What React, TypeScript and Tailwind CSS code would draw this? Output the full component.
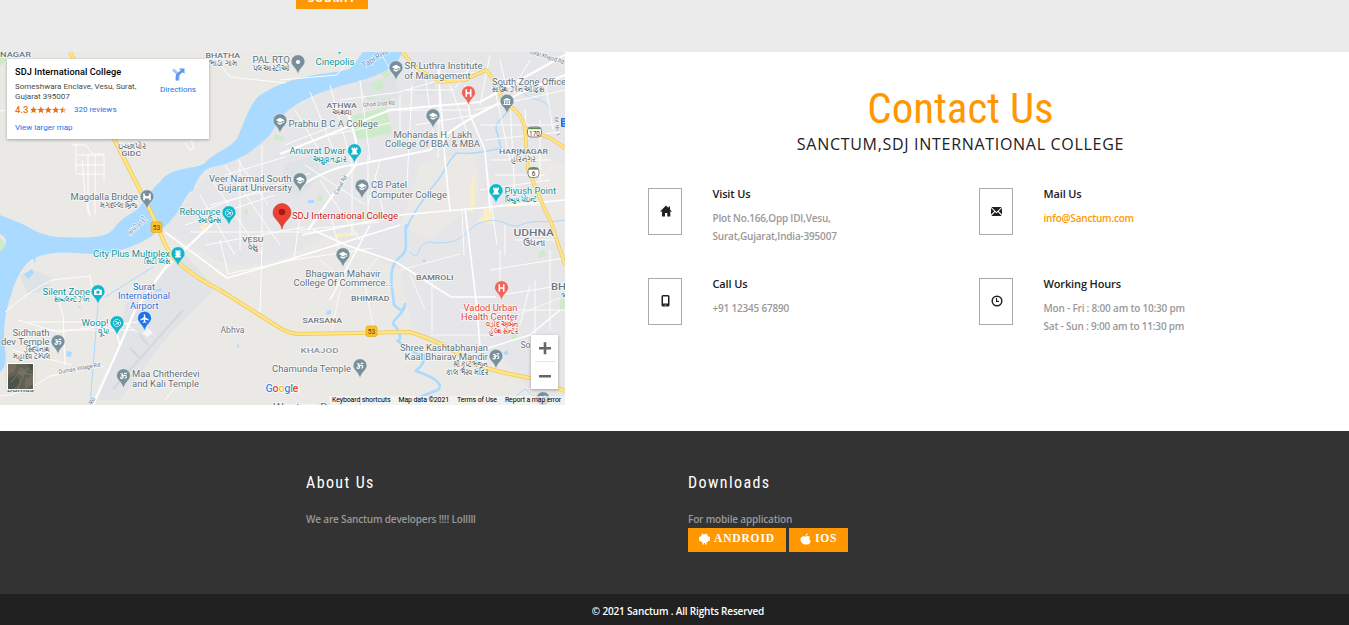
import React from "react";

type Label = { t: string; x: number; y: number; w?: number; s?: number; c?: string; b?: number; r?: number };

const SLATE = "#5b7280";
const TEAL = "#0e939d";
const TOWN = "#6b7784";

const labels: Label[] = [
  { t: "NAGAR", x: 0, y: 57, w: 31, s: 7.5, c: TOWN, b: 500 },
  { t: "BHATHA", x: 205.5, y: 58, w: 34.5, s: 7.5, c: TOWN, b: 500 },
  { t: "ભાઠા ગામ", x: 209, y: 66, w: 29, s: 7.5, c: TOWN },
  { t: "PAL RTO", x: 252.5, y: 63, w: 37.5, c: SLATE },
  { t: "પલ આરટીઓ", x: 252.5, y: 71, w: 37, s: 7.5, c: SLATE },
  { t: "Cinepolis", x: 315.5, y: 64.5, w: 39, c: TEAL },
  { t: "Tapi River", x: 364, y: 68, w: 32, s: 8, c: "#5f8fc9", r: -32 },
  { t: "SR Luthra Institute", x: 404.5, y: 69, w: 78, c: SLATE },
  { t: "of Management", x: 404.5, y: 78.5, w: 66, c: SLATE },
  { t: "South Zone Office", x: 492, y: 84.5, w: 74, c: SLATE },
  { t: "સાઉથ ઝોન ઓફિસ", x: 492, y: 92, w: 52, s: 7.5, c: SLATE },
  { t: "ATHWA", x: 326.5, y: 107.5, w: 30.5, s: 7.5, c: TOWN, b: 500 },
  { t: "અથવા", x: 332, y: 115, w: 20, s: 7.5, c: TOWN },
  { t: "Ghod Dod Rd", x: 363, y: 107, w: 32, s: 6, c: TOWN, r: -4 },
  { t: "Surat Khajod Rd", x: 529, y: 53, w: 36, s: 6, c: TOWN, r: 18 },
  { t: "Bd. No. 3", x: 554, y: 117, w: 19, s: 5.5, c: TOWN, r: 82 },
  { t: "Prabhu B C A College", x: 288.5, y: 127, w: 89.5, c: SLATE },
  { t: "Mohandas H. Lakh", x: 393.5, y: 138, w: 78.5, c: SLATE },
  { t: "College Of BBA & MBA", x: 385, y: 147, w: 95, c: SLATE },
  { t: "Anuvrat Dwar", x: 289.5, y: 153.5, w: 56, c: TEAL },
  { t: "અણુવ્રત દ્વાર", x: 312.5, y: 161.5, w: 34, s: 7.5, c: TEAL },
  { t: "HARINAGAR", x: 499, y: 154, w: 49, s: 7.5, c: TOWN, b: 500 },
  { t: "હરિનગર", x: 511, y: 161.5, w: 25, s: 7.5, c: TOWN },
  { t: "Canal Rd", x: 337, y: 195, w: 21, s: 6, c: TOWN, r: -60 },
  { t: "ઇચ્છાપોર", x: 117.5, y: 148.5, w: 29, s: 7.5, c: TOWN },
  { t: "GIDC", x: 121.5, y: 156, w: 19.5, s: 7.5, c: TOWN, b: 500 },
  { t: "Veer Narmad South", x: 209, y: 181.5, w: 82.5, c: SLATE },
  { t: "Gujarat University", x: 217.5, y: 191, w: 74.5, c: SLATE },
  { t: "CB Patel", x: 371, y: 188, w: 36, c: SLATE },
  { t: "Computer College", x: 371, y: 197.5, w: 76, c: SLATE },
  { t: "Magdalla Bridge", x: 70.5, y: 200, w: 67.5, c: SLATE },
  { t: "મગદલ્લા બ્રિજ", x: 100, y: 207.5, w: 38, s: 7.5, c: SLATE },
  { t: "તાપી નદી", x: 130, y: 236, w: 24, s: 7.5, c: "#5f8fc9", r: -43 },
  { t: "Rebounce", x: 179.5, y: 215, w: 41, c: TEAL },
  { t: "રેબાઉન્સ", x: 198, y: 223, w: 23, s: 7.5, c: TEAL },
  { t: "Piyush Point", x: 504.5, y: 193.5, w: 51.5, c: TEAL },
  { t: "પિયુષ પોઇન્ટ", x: 504.5, y: 201.5, w: 33, s: 7.5, c: TEAL },
  { t: "SDJ International College", x: 292, y: 219, w: 106, c: "#c5221f" },
  { t: "UDHNA", x: 513.5, y: 236, w: 40.5, s: 9, c: TOWN, b: 500 },
  { t: "ઉધના", x: 522.5, y: 246, w: 23, s: 9, c: TOWN },
  { t: "VESU", x: 242, y: 242, w: 21.5, s: 7.5, c: TOWN, b: 500 },
  { t: "વેસુ", x: 247.5, y: 250, w: 10, s: 7.5, c: TOWN },
  { t: "City Plus Multiplex", x: 93, y: 256.5, w: 77, c: TEAL },
  { t: "સિટી પ્લસ", x: 144, y: 264, w: 26, s: 7.5, c: TEAL },
  { t: "Bhagwan Mahavir", x: 305.5, y: 277, w: 75, c: SLATE },
  { t: "College Of Commerce...", x: 293.5, y: 286, w: 99.5, c: SLATE },
  { t: "BAMROLI", x: 416, y: 279.5, w: 37.5, s: 7.5, c: TOWN, b: 500 },
  { t: "BH", x: 551, y: 289.5, w: 15, s: 9, c: TOWN, b: 500 },
  { t: "ભ", x: 561, y: 299, s: 8, c: TOWN },
  { t: "Surat", x: 133, y: 289.5, w: 22, c: "#2f6ed3" },
  { t: "International", x: 118, y: 299, w: 52, c: "#2f6ed3" },
  { t: "Airport", x: 130, y: 308.5, w: 28.5, c: "#2f6ed3" },
  { t: "Silent Zone", x: 42.5, y: 295, w: 47.5, c: TEAL },
  { t: "સાયલન્ટ ઝોન", x: 54, y: 302, w: 36, s: 7.5, c: TEAL },
  { t: "BHIMRAD", x: 351, y: 301, w: 38.5, s: 7.5, c: TOWN, b: 500 },
  { t: "Vadod Urban", x: 463.5, y: 310.5, w: 54, c: "#e24840" },
  { t: "Health Center", x: 461, y: 319.5, w: 57, c: "#e24840" },
  { t: "વડોદ અર્બન", x: 486, y: 327, w: 32, s: 7.5, c: "#e24840" },
  { t: "હેલ્થ સેન્ટર", x: 489, y: 334, w: 29, s: 7.5, c: "#e24840" },
  { t: "SARSANA", x: 302.5, y: 322.5, w: 39.5, s: 7.5, c: TOWN, b: 500 },
  { t: "Woop!", x: 81.5, y: 325.5, w: 27, c: TEAL },
  { t: "વૂપ!", x: 98, y: 334, w: 11, s: 7.5, c: TEAL },
  { t: "Abhva", x: 220.5, y: 333, w: 24, s: 8.3, c: TOWN },
  { t: "Sidhnath", x: 12.5, y: 335.5, w: 37, c: SLATE },
  { t: "dev Temple", x: 1, y: 345, w: 48.5, c: SLATE },
  { t: "સિદ્ધનાથ", x: 26, y: 352, w: 24, s: 7.5, c: SLATE },
  { t: "મહાદેવ ટેમ્પલ", x: 13, y: 359, w: 37, s: 7.5, c: SLATE },
  { t: "KHAJOD", x: 300.5, y: 353, w: 38, s: 7.5, c: "#8b929a", b: 500 },
  { t: "Shree Kashtabhanjan", x: 400, y: 350.5, w: 88, c: SLATE },
  { t: "Kaal Bhairav Mandir", x: 404.5, y: 359.5, w: 83.5, c: SLATE },
  { t: "શ્રી કષ્ટભંજન", x: 453, y: 367, w: 35, s: 7.5, c: SLATE },
  { t: "કાલ ભૈરવ મંદિર", x: 446, y: 374.5, w: 42, s: 7.5, c: SLATE },
  { t: "So", x: 520.5, y: 348, w: 10, c: TOWN },
  { t: "Chamunda Temple", x: 272, y: 372, w: 79, c: SLATE },
  { t: "Dumas Village Rd", x: 59, y: 374, w: 42, s: 6, c: TOWN, r: -10 },
  { t: "Maa Chitherdevi", x: 132, y: 377, w: 67.5, c: SLATE },
  { t: "and Kali Temple", x: 132, y: 386.5, w: 67, c: SLATE },
  { t: "Dumas", x: 7, y: 392, w: 27, s: 8, c: TOWN, b: 500 },
  { t: "Rd", x: 92, y: 405, s: 6, c: TOWN, r: -60 },
  { t: "Western Dimond...", x: 273, y: 410, w: 98, c: SLATE },
];

type PinKind = "cap" | "dot" | "H" | "bank" | "fort" | "om" | "film" | "camera" | "plane" | "ball" | "bridge";
const pins: { x: number; y: number; c: string; k: PinKind }[] = [
  { x: 298, y: 62, c: "#78909c", k: "dot" },
  { x: 396, y: 68, c: "#78909c", k: "cap" },
  { x: 280, y: 121, c: "#78909c", k: "cap" },
  { x: 433, y: 116, c: "#78909c", k: "cap" },
  { x: 468.5, y: 93, c: "#f0625a", k: "H" },
  { x: 507, y: 101.5, c: "#78909c", k: "bank" },
  { x: 354.5, y: 151, c: "#12b5cb", k: "fort" },
  { x: 300, y: 180, c: "#78909c", k: "cap" },
  { x: 362, y: 186.5, c: "#78909c", k: "cap" },
  { x: 496, y: 191, c: "#12b5cb", k: "fort" },
  { x: 147, y: 197, c: "#78909c", k: "bridge" },
  { x: 229, y: 213, c: "#12b5cb", k: "ball" },
  { x: 178, y: 254, c: "#12b5cb", k: "film" },
  { x: 343, y: 255, c: "#78909c", k: "cap" },
  { x: 98, y: 292, c: "#12b5cb", k: "camera" },
  { x: 144.5, y: 318.5, c: "#1a73e8", k: "plane" },
  { x: 117, y: 323, c: "#12b5cb", k: "ball" },
  { x: 58, y: 342, c: "#78909c", k: "om" },
  { x: 501.5, y: 288, c: "#f0625a", k: "H" },
  { x: 360, y: 366, c: "#78909c", k: "om" },
  { x: 496, y: 356.5, c: "#78909c", k: "om" },
  { x: 123.5, y: 376, c: "#78909c", k: "om" },
  { x: 543, y: 399, c: "#78909c", k: "om" },
];

function PinGlyph({ k }: { k: PinKind }) {
  switch (k) {
    case "cap":
      return <path d="M-4.2-1L0-3.2 4.2-1V2H3.4V-.4L0 1.4zM-2.5 .9L0 2.2 2.5 .9V2.4L0 3.7-2.5 2.4z" />;
    case "dot":
      return <circle r="2.1" />;
    case "H":
      return <path d="M-3-3.8h1.6v3h2.8v-3H3v7.6H1.4V.7h-2.8v3.1H-3z" />;
    case "bank":
      return <path d="M-3.6-1.8L0-3.6 3.6-1.8V-1h-7.2zM-3-.5h1.2v2.7H-3zM-.6-.5H.6v2.7H-.6zM1.8-.5H3v2.7H1.8zM-3.6 2.5h7.2v1h-7.2z" />;
    case "fort":
      return <path d="M-3-3.6h1.4v1h1v-1H.6v1h1v-1H3v2.4H2L2.3 1.9H3.3V3.5H-3.3V1.9h1L-2-1.2h-1z" />;
    case "film":
      return <path d="M-2.8-3.4h5.6v1h-1v.8h1v1h-1v.8h1v1h-1V2h1v1.400h-5.600V2h1v-.8h-1v-1h1v-.8h-1v-1h1v-.8h-1z" />;
    case "camera":
      return <path fillRule="evenodd" d="M-3.8-2.2h2l.8-1h2l.8 1h2V3h-7.6zM0-1.5a1.7 1.7 0 100 3.4 1.7 1.7 0 000-3.4z" />;
    case "plane":
      return <path d="M-.7-4h1.4v2.8L4.2 1v1L.7 1V3l1.1.8v.8L0 4.1l-1.8.5v-.8L-.7 3V1l-3.5 1V1L-.7-1.2z" />;
    case "bridge":
      return <path d="M-3.8-3.4h1.6v1.6A3 3 0 000-.8a3 3 0 002.2-1v-1.6h1.6v6.6H2.2V1.6h-4.4v1.6h-1.6z" />;
    case "ball":
      return (
        <g fill="none" stroke="#fff" strokeWidth="1">
          <circle r="3.6" strokeDasharray="1.6 .7" />
          <path d="M-1.8-1.4Q1-2 1.4 1.8M-1.6 1.8Q0-.4 2.4-.6" />
        </g>
      );
    default:
      return <path fill="none" stroke="#fff" strokeWidth="1.1" d="M-3-2Q-.6-3-.9-.7L-1.8 0Q.2.4-.8 2-2.2 3-3.4 1.4M-.6.2Q1.6-1.6 2.8 0 3 2.4 1 2M.8-3.2Q2-1.8 3.2-3" />;
  }
}

function Pin({ x, y, c, k }: { x: number; y: number; c: string; k: PinKind }) {
  return (
    <g transform={`translate(${x} ${y})`}>
      <path d="M0-7.2A6.9 6.9 0 00-6.9-.3C-6.9 4-1.6 5.6 0 12.4 1.6 5.6 6.9 4 6.9-.3A6.9 6.9 0 000-7.2z" fill={c} stroke="#fff" strokeOpacity=".6" strokeWidth=".7" />
      <g fill="#fff">
        <PinGlyph k={k} />
      </g>
    </g>
  );
}

function Shield({ x, y, n }: { x: number; y: number; n: string }) {
  return (
    <g transform={`translate(${x} ${y})`}>
      <rect x="-5.5" y="-5.5" width="11" height="10.5" rx="2" fill="#fbc02d" stroke="#e0a100" strokeWidth=".6" />
      <text y="2.2" textAnchor="middle" fontSize="6.5" fill="#5a4300">{n}</text>
    </g>
  );
}

function RoadBadge({ x, y, n }: { x: number; y: number; n: string }) {
  const w = n.length > 1 ? 7 : 5.5;
  return (
    <g transform={`translate(${x} ${y})`}>
      <rect x={-w} y="-5" width={w * 2} height="10" rx="3.5" fill="#fff" stroke="#777" strokeWidth=".9" />
      <path d={`M${-w + 1}-4.6H${w - 1}V-2.8H${-w + 1}z`} fill="#5f8f4c" />
      <text y="3.6" textAnchor="middle" fontSize="6.5" fill="#333">{n}</text>
    </g>
  );
}

function MapDrawing() {
  return (
    <svg className="block h-full w-full font-['Roboto','Noto_Sans',sans-serif]" viewBox="0 52 565 353">
      <rect y="52" width="565" height="353" fill="#ebe9e5" />
      <path fill="#e6e6e8" d="M405 52H565V405H540L505 360 430 345 412 325 400 270 330 235 260 270 215 260 180 240 160 226 177 213 193 193 213 167 240 157 267 137 285 113 347 80 397 63z" />
      <path fill="#e2e3e6" d="M125 305L185 255 215 288 165 340 120 400H95L118 345z" />
      <path fill="#ebe9e5" d="M420 165L475 150 480 200 430 240 400 225zM230 270L320 250 400 280 410 330 280 330 215 290zM530 150L565 165V245L545 205z" />
      <g fill="#dfe3e6">
        <path d="M20 275L35 270 52 278 48 293 27 293z" />
        <path d="M285 165l28-10 10 20-25 22-20-10zM360 83l35-8 4 22-30 5zM415 80l20 2v12h-20zM525 75l22 5-6 18-20-6z" />
      </g>
      <g fill="#cdebc8">
        <path d="M352 116l34-9 6 26-36 7zM372 84l9-5 4 8-10 4zM381 73l7-3 3 6-7 2zM381 100l10-2v4l-10 1zM366 96l6-2 1 5-6 1zM538 253l6-4 2 7-7 2zM0 238l6 5-6 10zM275 134l10 3-2 4-9-2zM244 210l4-1v5l-4 1zM560 300l5-2v12h-5zM0 66l6-5v-9H0zM511 335l5-2 1 5-5 2z" />
        <circle cx="320" cy="198" r="3" />
      </g>
      <g fill="#fbeec4">
        <path d="M472 177l3 1-1 12 1 13-2 10-4-1 2-14-2-8 2-4zM484 208l8 2v9l1 5-14-2v-4l4-1zM198 227l10-4-4 8zM336 234l22-2v3l-22 3zM508 203l15-1v4l-15 1z" />
      </g>

      <g fill="#aadaff">
        <path d="M363 52C357 60 353 67 347 70 330 74 295 73 260 95 250 103 243 125 238 137 232 148 214 152 205 163 195 170 170 166 160 182 150 190 147 200 143 202 136 214 125 214 115 227 107 239 92 238 57 237 38 235 30 227 20 223L0 215V234Q12 240 0 252V372Q8 366 5 350C2 325 7 306 12 292 18 272 28 259 37 257 70 245 90 262 127 248 145 242 152 236 158 231 170 224 172 218 177 213 184 202 188 190 193 191 198 176 205 168 213 167 228 164 240 158 247 154 258 146 262 142 270 135 276 125 280 117 285 113 305 97 322 92 347 84 365 80 385 74 397 62L403 52z" />
        <path d="M24 274l8-5 2 4-6 6zM33 259l3-4-1 8zM67 351l5 1-1 5-5-1zM155 290l7-2-1 3-6 1zM78 306l4 1-3 1zM327 311l4-1v4l-5 1zM422 259l4 1-2 3zM308 200h6v3h-6zM503 353l4-3 2 4-4 1zM237 346l2-2v4z" />
      </g>
      <g fill="none" stroke="#aadaff" strokeWidth="1.6" strokeLinecap="round">
        <path d="M510 110Q492 125 497 132L501 148Q475 155 456 153C445 165 445 172 438 180L430 190C425 198 412 213 407 228" strokeWidth="1.6" />
        <path d="M513 86Q530 100 540 100 548 104 550 110" strokeWidth="1" />
        <path d="M406 225C404 240 410 250 400 257 386 267 393 290 394 305L402 311Q406 303 405 304C405 314 393 318 393 324 400 330 402 340 398 341Q416 356 424 355C425 368 414 370 416 371 430 376 445 383 438 390 420 397 412 398 420 405" strokeWidth="2.6" />
        <path d="M153 267L105 297M98 305L90 405M410 252Q417 262 420 248 425 240 436 243 450 243 457 240C470 232 475 222 484 222 500 216 508 228 518 226 535 218 545 224 565 220M517 395l8-6 12 10" strokeWidth="1" />
      </g>

      <g fill="none" stroke="#fff" strokeWidth="1" strokeOpacity=".9">
        <path d="M72 145h14l6 9h12v28M78 155h25M75 165h28M76 174h27M88 154v60M95 155v60M82 160l3 35 5 22M80 195h18M185 143l5 7 4-2-3-8M210 52l20 25 56 6M0 111l7-1M280 80l57-5 8-10M76 143v30" />
        <path d="M5 312Q30 290 52 280L90 276 92 290M55 290l8 25 2 50M28 322h70M35 330h100M18 320l40 12 80-10M12 350l60 15M120 320l17 12M0 396q20 0 50-20l25-5 30-5M165 400l20-25" />
        <path d="M190 215l120-42M185 225l90-30M200 195l35 60M212 180l50 75M225 165l55 80M238 160l30 45M190 232h125M205 245l100-18M240 160v90M262 145v100M220 240l8 34 65-14 80-12M262 247l-2 65M225 175l60-18M210 205l80-20M300 215l-6 45M330 213l10 40M300 230l80-8" />
        <path d="M295 110l30 50M310 92l25 62M330 85l22 80M285 145l50-20M360 80l10 80M340 100l60-8 40-12M400 95v50M412 85l-5 100M425 75l10 70M440 68l-2 90M450 85l20 55M405 90h50M395 110h75M415 125l60-10M330 135l60-12M352 165v70M368 155v60M380 160l-12 45M305 165l60 40M375 175l10 45M320 180l40 60" />
        <path d="M475 60l-20 28M490 55l-10 50M500 60l8 35M530 60l-18 30M545 80l8 50M475 110l90-20M480 125h80M485 140l75-8M490 160h60M495 175h50M480 190l70-10M500 205h45M505 225v30M515 240h40M490 270l75-12M495 90l15 70M510 100l5 100M525 110l5 70M540 120v60M487 170l10 75M462 210l2 45M500 250v40M530 285l-10 40M500 295l65-10M510 310h55M535 280v60M550 250v80" />
        <path d="M400 270l30-8 30-8M410 275l15 35M432 273v60M350 290l30-35M340 290l-8 40M365 285l8 40M310 325v-10M320 260l30 25M460 310l50 8 50-20M430 335h70l5-20M380 52l12 20M405 65l25 10 60-3" strokeOpacity=".7" />
      </g>
      <g fill="none" stroke="#fff" strokeWidth="2.2" strokeLinejoin="round">
        <path d="M213 223L165 268 135 310 120 345 93 405M280 154L390 110 480 102 565 55M300 186Q335 165 355 165L430 150Q460 115 565 75M308 230L340 185 356 165V140L347 110" />
        <path d="M302 235Q350 225 400 215L480 208 565 200M165 232L227 278 262 268 400 225M313 230l33 15 50 17 55 35h45M438 68L445 160 450 210M465 85l5 30 15 35 5 60M465 208l12 100 3 40" strokeWidth="1.6" />
        <path d="M485 349L530 335 560 310M120 345l-5-18M370 225l-40 75" strokeWidth="1.4" />
      </g>
      <path d="M113 389L183 310M130 348l9 9M140 335l8 10" fill="none" stroke="#d5d8dc" strokeWidth="2.500" />
      <path d="M142 333l6-5 5 5-6 4z" fill="#f5f5f5" />
      <g fill="none" strokeLinejoin="round">
        <path d="M70 52L112 135 150 210 160 232Q168 255 178 262 195 278 220 290L280 328Q290 334 300 334L410 332Q450 345 475 365L505 373 530 378 565 391" stroke="#eec94f" strokeWidth="4" />
        <path d="M70 52L112 135 150 210 160 232Q168 255 178 262 195 278 220 290L280 328Q290 334 300 334L410 332Q450 345 475 365L505 373 530 378 565 391" stroke="#ffe48c" strokeWidth="2.6" />
        <path d="M402 52Q412 64 420 70L440 82 465 80 486 70Q497 82 503 102 522 112 525 128L528 170 545 210Q553 225 555 235L565 265M525 128L550 138 565 148" stroke="#eec94f" strokeWidth="3.6" />
        <path d="M402 52Q412 64 420 70L440 82 465 80 486 70Q497 82 503 102 522 112 525 128L528 170 545 210Q553 225 555 235L565 265M525 128L550 138 565 148" stroke="#ffe48c" strokeWidth="2.3" />
      </g>

      <Shield x={156.5} y={227.5} n="53" />
      <Shield x={371.5} y={331.5} n="53" />
      <RoadBadge x={534.5} y={132} n="170" />
      <RoadBadge x={533.5} y={172.5} n="6" />
      <rect x="561" y="118" width="9" height="9" rx="1" fill="#1a73e8" />
      <path d="M562.500 120H566M562.500 122.500H565M562.500 125H566" stroke="#fff" strokeWidth=".8" />
      <path d="M338 52h3l-1.500 2z" fill="#12b5cb" />

      {pins.map((p) => (
        <Pin key={`${p.x}-${p.y}`} {...p} />
      ))}
      <path d="M282 203.500a9 9 0 00-9 9c0 6.500 7.500 8.500 9 16.500 1.500-8 9-10 9-16.500a9 9 0 00-9-9z" fill="#ea4335" stroke="#c5221f" strokeWidth=".5" />
      <circle cx="282" cy="212" r="3.3" fill="#b31412" />

      {labels.map((l) => (
        <text
          key={`${l.t}-${l.x}`}
          x={l.x}
          y={l.y}
          fontSize={l.s ?? 9}
          fontWeight={l.b ?? 400}
          fill={l.c}
          stroke="#fff"
          strokeWidth="1.6"
          strokeOpacity=".75"
          strokeLinejoin="round"
          paintOrder="stroke"
          textLength={l.w}
          lengthAdjust="spacingAndGlyphs"
          transform={l.r ? `rotate(${l.r} ${l.x} ${l.y})` : undefined}
        >
          {l.t}
        </text>
      ))}
      <text x="265.500" y="391.500" fontSize="11" fontWeight="500" stroke="#fff" strokeWidth="1.500" paintOrder="stroke" textLength="33">
        <tspan fill="#4285f4">G</tspan><tspan fill="#ea4335">o</tspan><tspan fill="#fbbc05">o</tspan><tspan fill="#4285f4">g</tspan><tspan fill="#34a853">l</tspan><tspan fill="#ea4335">e</tspan>
      </text>
    </svg>
  );
}

function Stars() {
  return (
    <svg className="h-[8px] w-[37px]" viewBox="0 0 37 8" fill="#e7711b">
      {[0, 1, 2, 3].map((i) => (
        <path key={i} transform={`translate(${i * 7.4} 0)`} d="M3.500.2l1 2.500 2.700.2-2.100 1.700.7 2.700-2.300-1.500-2.300 1.500.7-2.700L-.2 2.900l2.700-.2z" />
      ))}
      <path transform="translate(29.600 0)" d="M3.500.2V5.800L1.200 7.300l.7-2.700L-.2 2.900l2.700-.2z" />
      <path transform="translate(29.600 0)" fill="#f3b993" d="M3.500.2l1 2.500 2.700.2-2.100 1.700.7 2.700-2.300-1.500z" />
    </svg>
  );
}

function MapCard() {
  return (
    <div className="absolute left-[7px] top-[7px] flex h-[80px] w-[202px] justify-between bg-white pl-[8px] pr-[13px] shadow-[0_1px_3px_rgba(0,0,0,0.3)]">
      <div className="whitespace-nowrap pt-[6px] text-[8px] leading-[10px]">
        <div className="text-[9.200px] font-medium leading-[13px] tracking-[0.080px] text-black">SDJ International College</div>
        <div className="mt-[4px] tracking-[0.010px] text-[#4a4a4a]">Someshwara Enclave, Vesu, Surat,<br />Gujarat 395007</div>
        <div className="mt-[3px] flex items-center text-[#1a73e8]">
          <span className="w-[15px] text-[9.500px] font-medium text-[#e7711b]">4.3</span>
          <Stars />
          <span className="ml-[7px]">320 reviews</span>
        </div>
        <div className="mt-[8px] text-[#1a73e8]">View larger map</div>
      </div>
      <div className="flex flex-col items-center pt-[9px] text-[8px] leading-[10px] text-[#1a73e8]">
        <svg className="h-[13px] w-[13px]" viewBox="0 0 13 13" fill="none">
          <path d="M1 1.500L6.200 6.500V12.500" stroke="#a9c7f5" strokeWidth="3" />
          <path d="M5 12.500V9Q5 7 6.500 6L10 3" stroke="#5e97f0" strokeWidth="2.800" />
          <path d="M7 .5h5.500V6z" fill="#5e97f0" />
        </svg>
        <span className="mt-[4px]">Directions</span>
      </div>
    </div>
  );
}

function MapPanel() {
  return (
    <div className="relative h-[353px] w-[565px] shrink-0 overflow-hidden font-['Roboto',sans-serif]">
      <MapDrawing />
      <MapCard />
      <svg className="absolute left-[7px] top-[311px] h-[27px] w-[27px] border border-white shadow" viewBox="0 0 25 25">
        <rect width="25" height="25" fill="#5f6152" />
        <path d="M0 0h9L6 8l-6 3zM12 3l7 3-4 7-6-4zM17 15l8-4v9l-8 5z" fill="#746c5c" />
        <path d="M0 14l9-3 3 8-7 6H0zM19 0h6v8z" fill="#4b5446" />
        <path d="M3 18L12 8l12 3M10 25l3-9 7-12" stroke="#80786a" fill="none" />
      </svg>
      <div className="absolute left-[531px] top-[283px] flex h-[54px] w-[27px] flex-col items-center bg-white shadow-[0_1px_3px_rgba(0,0,0,0.3)]">
        <svg className="h-[54px] w-[27px]" viewBox="0 0 27 54" stroke="#666" strokeWidth="2.600">
          <path d="M8 13.300h12M14 7.300v12M8 41.200h12" />
          <path d="M4 26.500h20" stroke="#e6e6e6" strokeWidth="1" />
        </svg>
      </div>
      <div className="absolute bottom-0 right-0 flex h-[9px] items-center gap-[8px] bg-[#f5f5f5]/70 pl-[3px] pr-[4px] text-[7px] leading-[9px] tracking-[-0.130px] whitespace-nowrap text-black">
        <span>Keyboard shortcuts</span>
        <span>Map data ©2021</span>
        <span>Terms of Use</span>
        <span>Report a map error</span>
      </div>
    </div>
  );
}

const HomeIcon = () => (
  <svg className="ml-[1px] h-[12px] w-[12px]" viewBox="0 0 12 12" fill="#212121"><path d="M6 .5L8.500 3V1.500H10v3L12 6.600H10.300V11.500H7.300V8H5v3.500H2V6.600H0z" /></svg>
);
const MailIcon = () => (
  <svg className="ml-[1px] h-[9px] w-[11px]" viewBox="0 0 11 9" fill="#212121"><path d="M.3 0h10.400L5.500 5zM0 1l3.300 3.200L0 7.600zM11 1v6.600L7.700 4.200zM4 4.900l1.500 1.400L7 4.900l3.700 4.100H.3z" /></svg>
);
const PhoneIcon = () => (
  <svg className="h-[12px] w-[9px]" viewBox="0 0 9 12" fill="#212121"><path fillRule="evenodd" d="M2 0h5a1.500 1.500 0 011.500 1.500v8.500A1.500 1.500 0 017 11.500H2A1.500 1.500 0 01.5 10V1.500A1.500 1.500 0 012 0zM2 1.600v7h5v-7zM3.700 9.700v.8h1.600v-.8z" /></svg>
);
const ClockIcon = () => (
  <svg className="ml-[1px] h-[12px] w-[12px]" viewBox="0 0 12 12" fill="none" stroke="#212121"><circle cx="6" cy="6" r="4.800" strokeWidth="1.500" /><path d="M5.500 3v3.400H8" strokeWidth="1.100" /></svg>
);

function InfoItem({ icon, title, children }: { icon: React.ReactNode; title: string; children: React.ReactNode }) {
  return (
    <div className="flex h-[47px]">
      <div className="flex h-[47px] w-[34px] shrink-0 items-center justify-center border border-[#aaa] pb-[1px]">{icon}</div>
      <div className="ml-[30.500px] whitespace-nowrap">
        <h4 className="text-[11px] font-semibold leading-[12px] tracking-[-0.140px] text-[#212121]">{title}</h4>
        <div className="mt-[10px] text-[10px] font-semibold leading-[17.600px] tracking-[-0.200px] text-[#999]">{children}</div>
      </div>
    </div>
  );
}

function Contact() {
  return (
    <div className="flex-1 pt-[33px]">
      <div className="ml-[7px] flex flex-col items-center">
        <h2 className="h-[47px] text-[43px] leading-[47px] text-[#ff9800] font-['Roboto_Condensed','Roboto',sans-serif] [font-stretch:75%]">Contact Us</h2>
        <p className="text-[16px] leading-[24px] tracking-[0.700px] text-[#212121]">SANCTUM,SDJ INTERNATIONAL COLLEGE</p>
      </div>
      <div className="ml-[83px] mt-[32px] grid grid-cols-[331px_300px] gap-y-[43px]">
        <InfoItem icon={<HomeIcon />} title="Visit Us">Plot No.166,Opp IDI,Vesu,<br />Surat,Gujarat,India-395007</InfoItem>
        <InfoItem icon={<MailIcon />} title="Mail Us"><span className="text-[#ff9800]">info@Sanctum.com</span></InfoItem>
        <InfoItem icon={<PhoneIcon />} title="Call Us">+91 12345 67890</InfoItem>
        <InfoItem icon={<ClockIcon />} title="Working Hours">Mon - Fri : 8:00 am to 10:30 pm<br />Sat - Sun : 9:00 am to 11:30 pm</InfoItem>
      </div>
    </div>
  );
}

const AndroidIcon = () => (
  <svg className="h-[12px] w-[11px] shrink-0" viewBox="0 0 11 12" fill="#fff"><path d="M3 .3L4.200 1.200H6.800L8 .3 8.200 2Q9 2.700 9 3.500q2-.3 2 1.400v2Q11 8.200 9 8.200V9H7.600v2.500H6V10H5v1.500H3.400V9H2V8.200Q0 8.200 0 6.900v-2Q0 3.200 2 3.500 2 2.700 2.800 2z" /></svg>
);
const AppleIcon = () => (
  <svg className="h-[12px] w-[11px] shrink-0" viewBox="0 0 11 12" fill="#fff"><path d="M7.700.2Q7.900 2.300 5.700 3 5.500 1 7.700.2zM5.600 3.400Q8 2.200 10.200 3.900 8 5.900 10.800 8 9.700 11.300 8 11.500 6.800 10.900 5.600 11.400 3.500 12.200 1.600 9.600 0 7.500.6 5.300 1.900 2.400 5.600 3.400z" /></svg>
);

function StoreButton({ icon, label }: { icon: React.ReactNode; label: string }) {
  return (
    <button className="flex h-[24px] items-center gap-[4px] bg-[#ff9800] pl-[11px] pr-[11px] pb-[2px] text-[11.500px] font-bold tracking-[0.850px] text-white font-['Liberation_Serif',serif]">
      {icon}
      <span>{label}</span>
    </button>
  );
}

export default function App() {
  return (
    <div className="h-[625px] w-[1349px] overflow-hidden bg-white font-['Open_Sans',sans-serif]">
      <div className="h-[52px] bg-[#ebebeb] pl-[296px]">
        <div className="flex h-[9px] w-[72px] items-end justify-center overflow-hidden bg-[#ff9800]">
          <span className="mb-[4px] text-[11px] font-bold leading-[14px] tracking-[1px] text-white">SUBMIT</span>
        </div>
      </div>
      <div className="flex h-[379px]">
        <MapPanel />
        <Contact />
      </div>
      <footer>
        <div className="flex h-[163px] bg-[#333] pl-[306px] pt-[42px] text-[10px] font-semibold tracking-[-0.170px] text-[#999]">
          <div className="w-[382px]">
            <h3 className="text-[16px] font-normal leading-[20px] tracking-[1.400px] text-white font-['Roboto_Condensed','Roboto',sans-serif] [font-stretch:75%]">About Us</h3>
            <p className="mt-[17px] leading-[18px]">We are Sanctum developers !!!! Lolllll</p>
          </div>
          <div>
            <h3 className="text-[16px] font-normal leading-[20px] tracking-[1.400px] text-white font-['Roboto_Condensed','Roboto',sans-serif] [font-stretch:75%]">Downloads</h3>
            <p className="mt-[17px] leading-[18px]">For mobile application</p>
            <div className="flex gap-[3px]">
              <StoreButton icon={<AndroidIcon />} label="ANDROID" />
              <StoreButton icon={<AppleIcon />} label="IOS" />
            </div>
          </div>
        </div>
        <div className="flex h-[31px] justify-center bg-[#212121] pl-[7px] pt-[8px] text-[10px] font-semibold leading-[18px] tracking-[-0.170px] text-white">
          <p>© 2021 Sanctum . All Rights Reserved</p>
        </div>
      </footer>
    </div>
  );
}
